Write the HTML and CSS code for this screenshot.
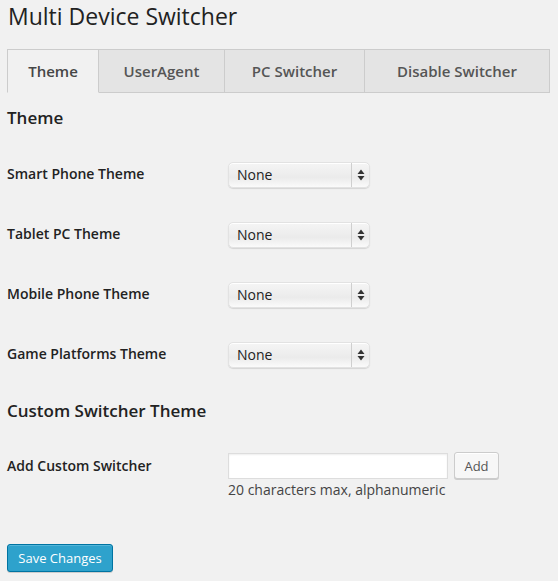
FILE: index.html
```html
<!DOCTYPE html>
<html>
<head>
<meta charset="utf-8">
<link rel="stylesheet" href="styles.css">
</head>
<body>
<div class="wrap">
  <h1 class="title">Multi Device Switcher</h1>
  <nav class="tabs">
    <span class="tab active">Theme</span>
    <span class="tab">UserAgent</span>
    <span class="tab">PC Switcher</span>
    <span class="tab">Disable Switcher</span>
  </nav>

  <h3 class="section">Theme</h3>
  <div class="rows">
    <div class="row">
      <div class="label">Smart Phone Theme</div>
      <div class="select"><span class="val">None</span><span class="arrows"><svg width="8" height="12" viewBox="0 0 8 12"><path d="M4 0.5L7.5 5H0.5Z M4 11.5L7.5 7H0.5Z" fill="#333"/></svg></span></div>
    </div>
    <div class="row">
      <div class="label">Tablet PC Theme</div>
      <div class="select"><span class="val">None</span><span class="arrows"><svg width="8" height="12" viewBox="0 0 8 12"><path d="M4 0.5L7.5 5H0.5Z M4 11.5L7.5 7H0.5Z" fill="#333"/></svg></span></div>
    </div>
    <div class="row">
      <div class="label">Mobile Phone Theme</div>
      <div class="select"><span class="val">None</span><span class="arrows"><svg width="8" height="12" viewBox="0 0 8 12"><path d="M4 0.5L7.5 5H0.5Z M4 11.5L7.5 7H0.5Z" fill="#333"/></svg></span></div>
    </div>
    <div class="row">
      <div class="label">Game Platforms Theme</div>
      <div class="select"><span class="val">None</span><span class="arrows"><svg width="8" height="12" viewBox="0 0 8 12"><path d="M4 0.5L7.5 5H0.5Z M4 11.5L7.5 7H0.5Z" fill="#333"/></svg></span></div>
    </div>
  </div>

  <h3 class="section section2">Custom Switcher Theme</h3>
  <div class="custom">
    <div class="label">Add Custom Switcher</div>
    <div class="field">
      <div class="field-line">
        <span class="input"></span>
        <span class="btn">Add</span>
      </div>
      <p class="help">20 characters max, alphanumeric</p>
    </div>
  </div>

  <span class="primary">Save Changes</span>
</div>
</body>
</html>
```

FILE: styles.css
```css
html, body {
  margin: 0;
  padding: 0;
  background: #f1f1f1;
}
body {
  font-family: "Open Sans", "Liberation Sans", sans-serif;
  color: #222;
  width: 558px;
  height: 581px;
  overflow: hidden;
}
.wrap {
  padding: 0 8px 0 7px;
}
.title {
  margin: 0;
  padding-top: 2px;
  font-size: 23px;
  font-weight: 400;
  line-height: 29px;
  color: #222;
  padding-left: 1px;
}
.tabs {
  margin-top: 18px;
  display: grid;
  grid-template-columns: 92px 126px 140px 185px;
  width: 543px;
}
.tab {
  box-sizing: border-box;
  height: 44px;
  display: flex;
  align-items: center;
  justify-content: center;
  background: #e4e4e4;
  border: 1px solid #ccc;
  border-left: none;
  font-size: 15px;
  font-weight: 600;
  color: #555;
  padding-bottom: 1px;
}
.tab.active {
  background: #f1f1f1;
  border-left: 1px solid #ccc;
  border-bottom-color: #f1f1f1;
  color: #464646;
}
.section {
  margin: 13px 0 0 0;
  font-size: 17px;
  line-height: 24px;
  font-weight: 600;
  color: #222;
}
.section2 {
  margin-top: 14px;
}
.rows {
  margin-top: 15px;
}
.row {
  display: grid;
  grid-template-columns: 221px auto;
  align-items: center;
  height: 60px;
}
.label {
  font-size: 14px;
  font-weight: 600;
  padding-left: 0;
  color: #222;
  line-height: 20px;
}
.row .label {
  margin-top: -2px;
}
.select {
  box-sizing: border-box;
  width: 142px;
  height: 26px;
  border-radius: 5px;
  border: 1px solid #e2e2e2;
  background: linear-gradient(#f5f5f5, #ebebeb 60%, #fafafa);
  box-shadow: 0 1px 1px rgba(0,0,0,0.12), inset 0 1px 0 #fff;
  display: flex;
  align-items: center;
}
.val {
  flex: 1;
  font-size: 14px;
  padding-left: 8px;
  color: #222;
  line-height: 24px;
}
.arrows {
  width: 17px;
  height: 24px;
  border-left: 1px solid #cfcfcf;
  display: flex;
  align-items: center;
  justify-content: center;
}
.arrows svg {
  display: block;
}
.custom {
  margin-top: 30px;
  display: grid;
  grid-template-columns: 221px auto;
  align-items: start;
}
.custom .label {
  margin-top: 3px;
}
.field-line {
  display: flex;
  align-items: center;
  gap: 6px;
}
.input {
  box-sizing: border-box;
  width: 220px;
  height: 26px;
  background: #fff;
  border: 1px solid #ddd;
  box-shadow: inset 0 1px 2px rgba(0,0,0,0.07);
}
.btn {
  box-sizing: border-box;
  width: 45px;
  height: 27px;
  margin-top: -1px;
  border: 1px solid #ccc;
  border-radius: 3px;
  background: #f7f7f7;
  box-shadow: 0 1px 0 #ccc, inset 0 1px 0 #fff;
  font-size: 13px;
  color: #555;
  display: flex;
  align-items: center;
  justify-content: center;
}
.help {
  margin: 1px 0 0;
  font-size: 14px;
  line-height: 20px;
  color: #444;
}
.primary {
  display: inline-flex;
  align-items: center;
  justify-content: center;
  box-sizing: border-box;
  margin-top: 44px;
  width: 106px;
  height: 28px;
  background: #2ea2cc;
  border: 1px solid #0074a2;
  border-radius: 3px;
  box-shadow: inset 0 1px 0 rgba(120,200,230,0.5), 0 1px 0 rgba(0,0,0,0.15);
  color: #fff;
  font-size: 13px;
}
```
